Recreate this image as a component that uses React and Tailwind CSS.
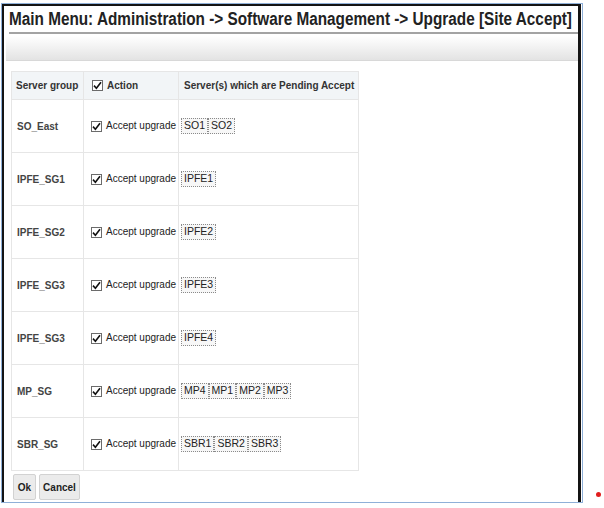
import React from "react";

const rows = [
  { g: "SO_East", s: ["SO1", "SO2"] },
  { g: "IPFE_SG1", s: ["IPFE1"] },
  { g: "IPFE_SG2", s: ["IPFE2"] },
  { g: "IPFE_SG3", s: ["IPFE3"] },
  { g: "IPFE_SG3", s: ["IPFE4"] },
  { g: "MP_SG", s: ["MP4", "MP1", "MP2", "MP3"] },
  { g: "SBR_SG", s: ["SBR1", "SBR2", "SBR3"] },
];

function Check() {
  return (
    <span className="inline-flex w-[11px] h-[11px] border border-[#6b6b6b] bg-white items-center justify-center shrink-0">
      <svg width="9" height="9" viewBox="0 0 9 9">
        <path d="M1 4.6 L3.4 7.2 L8 1.2" fill="none" stroke="#111" strokeWidth="1.6" />
      </svg>
    </span>
  );
}

export default function App() {
  return (
    <div className="w-[604px] h-[508px] bg-white flex font-['Liberation_Sans',Arial,sans-serif] text-[#222]">
      <div className="ml-[1px] mt-[3px] w-[582px] h-[500px] border border-[#8fb0d8] shrink-0">
        <div className="h-full border-l-2 border-t-2 border-r-[3px] border-[#141414] mr-[1px] flex flex-col">
          <div className="pl-[5px] pt-[2px] h-[26px] overflow-hidden">
            <div className="origin-left scale-x-[0.875] text-[17.5px] font-bold leading-[22px] text-[#222] whitespace-nowrap">
              Main Menu: Administration -&gt; Software Management -&gt; Upgrade [Site Accept]
            </div>
          </div>
          <div className="ml-[5px] h-[2px] bg-[#a3a3a3]" />
          <div className="ml-[2px] mt-[2px] h-[25px] bg-gradient-to-b from-white to-[#e3e3e3] border-b border-[#d8d8d8]" />
          <div className="ml-[7px] mt-[10px] w-[348px] border border-[#e6e6e6] text-[10px]">
            <div className="flex h-[27px] bg-[#f2f5f7] font-bold text-[#333] items-center">
              <div className="w-[72px] h-full flex items-center pl-[4px] border-r border-[#e6e6e6]">Server group</div>
              <div className="w-[95px] h-full flex items-center gap-[4px] pl-[8px] border-r border-[#e6e6e6]">
                <Check />
                <span>Action</span>
              </div>
              <div className="flex-1 h-full flex items-center pl-[5px]">Server(s) which are Pending Accept</div>
            </div>
            {rows.map((r, i) => (
              <div key={i} className="flex h-[53px] border-t border-[#e6e6e6] items-center">
                <div className="w-[72px] h-full flex items-center pl-[5px] border-r border-[#e6e6e6] font-bold text-[#444]">{r.g}</div>
                <div className="w-[95px] h-full flex items-center gap-[4px] pl-[7px] border-r border-[#e6e6e6] text-[#222]">
                  <Check />
                  <span className="pb-[2px]">Accept upgrade</span>
                </div>
                <div className="flex-1 h-full flex items-center pl-[2px]">
                  {r.s.map((s) => (
                    <span key={s} className="h-[16px] px-[2px] flex items-center border border-dotted border-[#8a8a8a] bg-[#f7f7f7] text-[#222] text-[10.5px]">
                      {s}
                    </span>
                  ))}
                </div>
              </div>
            ))}
          </div>
          <div className="ml-[9px] mt-[3px] flex gap-[3px]">
            <button className="h-[26px] w-[23px] bg-[#ebebeb] border border-[#d2d2d2] rounded-[2px] text-[10px] font-bold text-[#222]">Ok</button>
            <button className="h-[26px] w-[41px] bg-[#ebebeb] border border-[#d2d2d2] rounded-[2px] text-[10px] font-bold text-[#222]">Cancel</button>
          </div>
        </div>
      </div>
      <div className="flex-1 flex items-end justify-center pb-[11px] pl-[10px]">
        <span className="w-[5px] h-[5px] rounded-full bg-[#e11d1d]" />
      </div>
    </div>
  );
}
